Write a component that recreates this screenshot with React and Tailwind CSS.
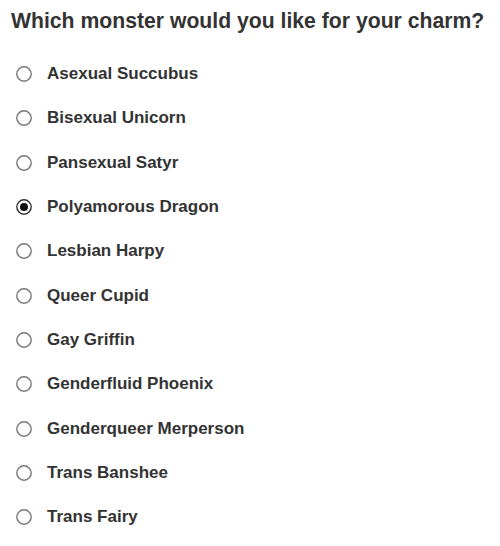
import React from "react";

const items = [
  "Asexual Succubus",
  "Bisexual Unicorn",
  "Pansexual Satyr",
  "Polyamorous Dragon",
  "Lesbian Harpy",
  "Queer Cupid",
  "Gay Griffin",
  "Genderfluid Phoenix",
  "Genderqueer Merperson",
  "Trans Banshee",
  "Trans Fairy",
];

function Radio({ checked }) {
  return (
    <svg width="16" height="16" viewBox="0 0 16 16" className="shrink-0">
      <circle cx="8" cy="8" r="7.2" fill="white" stroke={checked ? "#333333" : "#767676"} strokeWidth="1.4" />
      {checked && <circle cx="8" cy="8" r="4" fill="#111111" />}
    </svg>
  );
}

export default function App() {
  return (
    <div className="w-[500px] h-[546px] bg-white text-[#333333]" style={{ fontFamily: '"Liberation Sans", Arial, sans-serif' }}>
      <h1 className="pt-[9px] pl-[11px] text-[21.2px] font-bold leading-[24px]">
        Which monster would you like for your charm?
      </h1>
      <div className="pt-[19px] flex flex-col">
        {items.map((label, i) => (
          <label key={label} className="h-[44.3px] flex items-center pl-[16px]">
            <Radio checked={i === 3} />
            <span className="ml-[15px] text-[17px] font-bold leading-[20px]">{label}</span>
          </label>
        ))}
      </div>
    </div>
  );
}
